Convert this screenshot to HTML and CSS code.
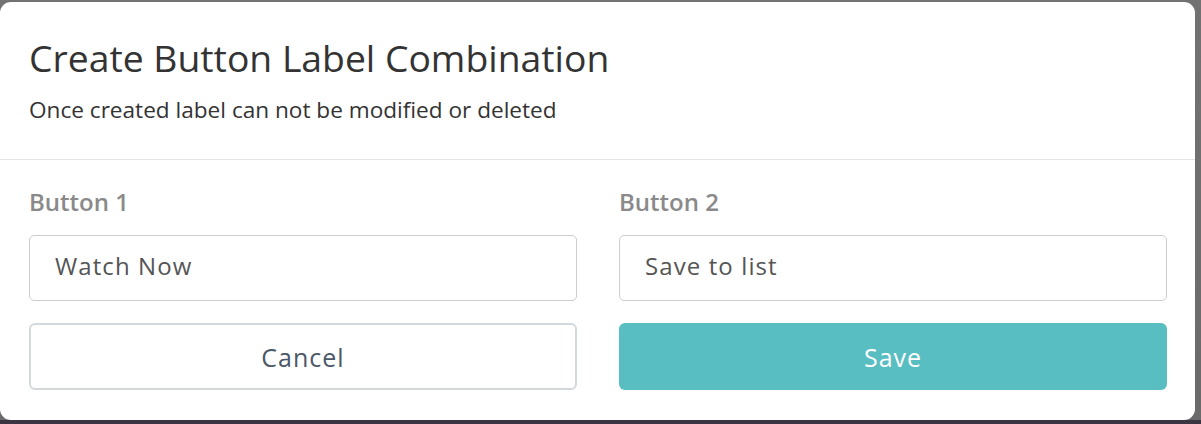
FILE: index.html
```html
<!DOCTYPE html>
<html>
<head>
<meta charset="utf-8">
<link rel="stylesheet" href="styles.css">
</head>
<body>
<div class="modal">
  <div class="modal-header">
    <h1 class="title">Create Button Label Combination</h1>
    <p class="subtitle">Once created label can not be modified or deleted</p>
  </div>
  <div class="modal-body">
    <div class="field">
      <label class="label">Button 1</label>
      <div class="input">Watch Now</div>
    </div>
    <div class="field">
      <label class="label">Button 2</label>
      <div class="input">Save to list</div>
    </div>
    <button class="btn btn-cancel">Cancel</button>
    <button class="btn btn-save">Save</button>
  </div>
</div>
</body>
</html>
```
FILE: styles.css
```css
html, body {
  margin: 0;
  padding: 0;
}
body {
  width: 1201px;
  height: 424px;
  background: linear-gradient(to bottom, #727272 0, #6a6a6a 420px, #3a3540 420px, #3a3540 424px);
  padding-top: 2px;
  box-sizing: border-box;
  font-family: "Open Sans", Lato, sans-serif;
  overflow: hidden;
}
.modal {
  width: 1195px;
  height: 418px;
  background: #fff;
  border-radius: 11px;
  box-sizing: border-box;
}
.modal-header {
  height: 158px;
  border-bottom: 1px solid #e3e3e3;
  padding: 34px 29px 0;
  box-sizing: border-box;
}
.title {
  margin: 0;
  font-size: 37.3px;
  line-height: 44px;
  font-weight: 400;
  color: #333;
  white-space: nowrap;
}
.subtitle {
  margin: 16px 0 0;
  font-size: 22.6px;
  line-height: 28px;
  color: #333;
  white-space: nowrap;
}
.modal-body {
  display: grid;
  grid-template-columns: 548px 548px;
  column-gap: 42px;
  row-gap: 22px;
  padding: 28px 29px 0;
}
.field {
  display: flex;
  flex-direction: column;
}
.label {
  font-size: 24px;
  line-height: 28px;
  font-weight: 600;
  color: #8a8a8a;
  margin-bottom: 19px;
}
.input {
  height: 66px;
  box-sizing: border-box;
  border: 1.5px solid #cdcdcd;
  border-radius: 5px;
  padding: 0 25px 6px;
  display: flex;
  align-items: center;
  font-size: 24px;
  letter-spacing: 1.1px;
  color: #555;
}
.btn {
  height: 67px;
  box-sizing: border-box;
  border-radius: 6px;
  font-family: inherit;
  font-size: 25px;
  letter-spacing: 1px;
  cursor: pointer;
  margin: 0;
  padding: 0;
}
.btn-cancel {
  background: #fff;
  border: 2px solid #d3d8dd;
  color: #4b5868;
}
.btn-save {
  background: #59bec1;
  border: none;
  color: #fff;
}
```
